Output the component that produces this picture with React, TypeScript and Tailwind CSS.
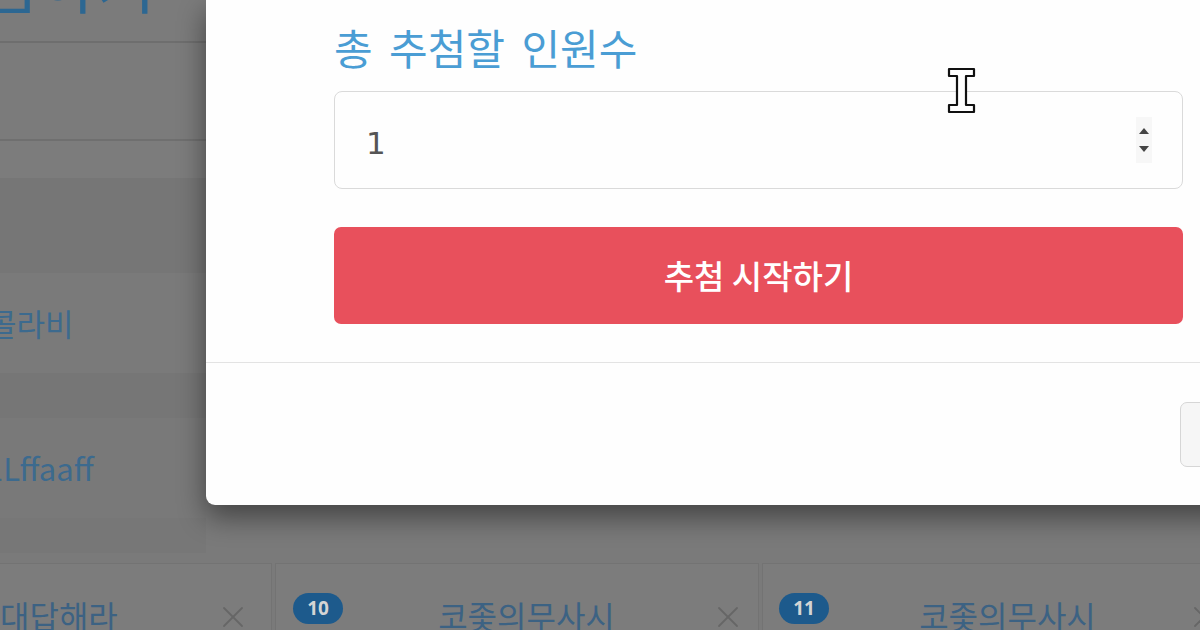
import { X } from 'lucide-react';

const kr = "font-['Noto_Sans_CJK_KR','Noto_Sans',sans-serif]";

function IBeam() {
    return (
        <svg width="29" height="47" viewBox="0 0 29 47" className="absolute left-[947px] top-[67px]">
            <path
                d="M2 2 H27 V9 H19 V38 H27 V45 H2 V38 H10 V9 H2 Z"
                fill="#fff"
                stroke="#111"
                strokeWidth="2.2"
                strokeLinejoin="round"
            />
        </svg>
    );
}

function Spinner() {
    return (
        <div className="flex flex-col items-center justify-center gap-[12px] w-[16px] h-[46px] bg-[#f7f7f7]">
            <svg width="10" height="6" viewBox="0 0 10 6">
                <path d="M5 0 L10 6 H0 Z" fill="#444" />
            </svg>
            <svg width="10" height="6" viewBox="0 0 10 6">
                <path d="M0 0 H10 L5 6 Z" fill="#444" />
            </svg>
        </div>
    );
}

function Card({ badge, name, className }: { badge?: string; name: string; className: string }) {
    return (
        <div className={`shrink-0 h-[67px] bg-[#7c7c7c] border-t border-[#737373] flex items-end pb-[2px] ${className}`}>
            <div className="flex items-center justify-between w-full h-[36px]">
                {badge ? (
                    <span className="w-[50px] h-[31px] rounded-full bg-[#1d5a8c] text-[#d4d4d4] text-[19px] font-bold flex items-center justify-center font-['Noto_Sans',sans-serif] translate-y-[-2px]">
                        {badge}
                    </span>
                ) : null}
                <span className={`${kr} text-[32px] leading-none text-[#3c6283] translate-y-[5px]`}>{name}</span>
                <X className="w-[36px] h-[36px] text-[#666] translate-y-[7px]" strokeWidth={1.2} />
            </div>
        </div>
    );
}

export default function App() {
    return (
        <div className={`relative w-[1200px] h-[630px] overflow-hidden bg-[#7a7a7a] ${kr}`}>
            {/* Page behind the backdrop */}
            <div className="h-[553px] w-[206px] flex flex-col">
                <div className="h-[43px] overflow-hidden border-b-2 border-[#6e6e6e] bg-[#7b7b7b]">
                    <div className="-mt-[60px] -ml-[80px] text-[64px] leading-[80px] text-[#2c6792] whitespace-nowrap">추첨하기</div>
                </div>
                <div className="h-[98px] border-b-2 border-[#6f6f6f] bg-[#7b7b7b]" />
                <div className="h-[37px] bg-[#7c7c7c]" />
                <div className="h-[95px] bg-[#767676]" />
                <div className="h-[100px] bg-[#7a7a7a] flex items-center overflow-hidden">
                    <span className="-ml-[12px] text-[31px] text-[#3c6a8e] whitespace-nowrap">콜라비</span>
                </div>
                <div className="h-[45px] bg-[#767676]" />
                <div className="h-[100px] bg-[#797979] flex items-center overflow-hidden">
                    <span className="-ml-[14px] text-[31px] text-[#3c6a8e] whitespace-nowrap">1Lffaaff</span>
                </div>
                <div className="flex-1 bg-[#777777]" />
            </div>

            <div className="flex gap-[3px] mt-[10px]">
                <Card name="대답해라" className="w-[272px] pl-0 pr-[20px] border-r border-[#727272]" />
                <Card badge="10" name="코좇의무사시" className="w-[484px] pl-[17px] pr-[12px] border-x border-[#727272]" />
                <Card badge="11" name="코좇의무사시" className="w-[490px] pl-[16px] pr-[30px] border-l border-[#727272]" />
            </div>

            {/* Modal */}
            <div className="absolute left-[206px] top-0 w-[1105px] h-[505px] bg-[#fefefe] rounded-bl-[9px] shadow-[0_12px_28px_rgba(0,0,0,0.45)] flex flex-col">
                <div className="px-[128px] pt-[18px] pb-[38px] border-b-[1.5px] border-[#e3e3e3]">
                    <div className="text-[42px] leading-[58px] text-[#4a9dd4] [word-spacing:7px]">총 추첨할 인원수</div>
                    <div className="mt-[15px] h-[98px] rounded-[8px] border-[1.5px] border-[#dadada] flex items-center pl-[31px] pr-[30px]">
                        <span className="flex-1 font-['DejaVu_Sans',sans-serif] text-[31px] text-[#555] translate-y-[3px]">1</span>
                        <Spinner />
                    </div>
                    <button className="mt-[38px] w-full h-[97px] rounded-[7px] bg-[#e8505c] text-white text-[33px] font-medium">
                        추첨 시작하기
                    </button>
                </div>
                <div className="flex-1 flex items-center justify-end pr-[23px]">
                    <button className="w-[108px] h-[65px] rounded-[7px] border-[1.5px] border-[#d6d6d6] bg-[#f6f6f6] text-[28px] text-[#333]">
                        닫기
                    </button>
                </div>
            </div>

            <IBeam />
        </div>
    );
}
